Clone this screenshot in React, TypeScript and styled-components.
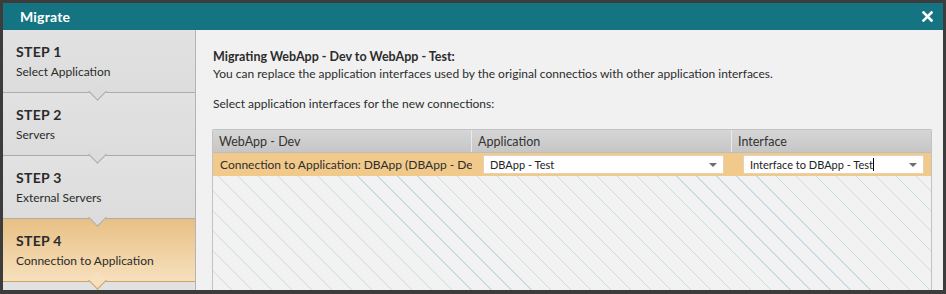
import React from "react";
import styled, { createGlobalStyle } from "styled-components";

const Global = createGlobalStyle`
  html, body { margin: 0; padding: 0; background: #3a3a3a; }
  body { font-family: Lato, "Open Sans", sans-serif; }
  #root { width: 946px; height: 294px; }
`;

const Frame = styled.div`
  box-sizing: border-box;
  width: 946px;
  height: 294px;
  border: 3px solid #3c3c3c;
  border-bottom-width: 4px;
  display: flex;
  flex-direction: column;
  background: #f1f1f1;
  overflow: hidden;
`;

const TitleBar = styled.div`
  height: 27px;
  flex: 0 0 27px;
  background: #157482;
  display: flex;
  align-items: center;
  justify-content: space-between;
  padding: 0 10px 0 17px;
  color: #fff;
  font-weight: 700;
  font-size: 14px;
  letter-spacing: 0.2px;
`;

const Body = styled.div`
  flex: 1;
  display: flex;
  min-height: 0;
`;

const Sidebar = styled.div`
  width: 192px;
  flex: 0 0 192px;
  border-right: 1px solid #b4b4b4;
  background: #dcdcdc;
  display: flex;
  flex-direction: column;
`;

const Step = styled.div<{ $active?: boolean }>`
  position: relative;
  box-sizing: border-box;
  height: 63px;
  flex: 0 0 63px;
  padding: 13px 0 0 13px;
  border-bottom: 1px solid ${(p) => (p.$active ? "#c9a36a" : "#acacac")};
  background: ${(p) =>
    p.$active
      ? "linear-gradient(#e8c085, #f7e0bd)"
      : "linear-gradient(#e2e2e2, #dcdcdc)"};
  color: #2b2b2b;
  &::after {
    content: "";
    position: absolute;
    left: 88px;
    bottom: -7px;
    width: 12px;
    height: 12px;
    transform: translateY(-1px) rotate(45deg);
    transform-origin: center;
    background: ${(p) => (p.$active ? "#f7e0bd" : "#dcdcdc")};
    border-right: 1px solid ${(p) => (p.$active ? "#c9a36a" : "#acacac")};
    border-bottom: 1px solid ${(p) => (p.$active ? "#c9a36a" : "#acacac")};
    z-index: 2;
  }
`;

const StepTitle = styled.div`
  font-weight: 700;
  font-size: 14px;
  line-height: 18px;
  letter-spacing: 0.3px;
`;

const StepLabel = styled.div`
  font-size: 12px;
  line-height: 16px;
  margin-top: 3px;
`;

const Main = styled.div`
  flex: 1;
  display: flex;
  flex-direction: column;
  padding: 18px 11px 0 16px;
  color: #2c2c2c;
  font-size: 12px;
  min-width: 0;
`;

const Heading = styled.div`
  font-weight: 700;
  font-size: 12.5px;
  line-height: 17px;
  padding-left: 1px;
`;

const Para = styled.div<{ $gap?: number }>`
  line-height: 17px;
  padding-left: 1px;
  margin-top: ${(p) => p.$gap ?? 0}px;
`;

const Grid = styled.div`
  margin-top: 17px;
  flex: 1;
  display: flex;
  flex-direction: column;
  border: 1px solid #c2c2c2;
  border-bottom: none;
  border-radius: 2px 2px 0 0;
  background-color: #f2f2f2;
  background-image: repeating-linear-gradient(
    45deg,
    transparent 0px,
    transparent 13.2px,
    #cadcdf 13.2px,
    #cadcdf 14.1px
  );
  overflow: hidden;
`;

const Row = styled.div<{ $kind: "head" | "sel" }>`
  display: grid;
  grid-template-columns: 259px 260px 1fr;
  height: ${(p) => (p.$kind === "head" ? 22 : 23)}px;
  background: ${(p) =>
    p.$kind === "head" ? "linear-gradient(#d6d6d6, #c6c6c6)" : "#f1c98b"};
  border-bottom: ${(p) => (p.$kind === "head" ? "1px solid #bdbdbd" : "none")};
`;

const HeadCell = styled.div<{ $last?: boolean }>`
  display: flex;
  align-items: center;
  padding-left: 6px;
  font-size: 12.5px;
  color: #333;
  border-right: ${(p) => (p.$last ? "none" : "1px solid #eaeaea")};
`;

const Cell = styled.div<{ $pad?: string }>`
  display: flex;
  align-items: center;
  padding: ${(p) => p.$pad ?? "0 0 0 7px"};
  font-size: 12px;
  color: #2e2e2e;
  white-space: nowrap;
  overflow: hidden;
  min-width: 0;
`;

const Select = styled.div`
  flex: 1;
  height: 19px;
  box-sizing: border-box;
  background: #fff;
  border: 1px solid #e2d2b6;
  display: flex;
  align-items: center;
  justify-content: space-between;
  padding: 0 6px 0 6px;
  font-size: 11px;
  color: #222;
`;

const Caret = styled.span`
  width: 0;
  height: 0;
  border-left: 4px solid transparent;
  border-right: 4px solid transparent;
  border-top: 4px solid #6d6d6d;
`;

const TextCursor = styled.span`
  display: inline-block;
  width: 1px;
  height: 13px;
  background: #000;
  vertical-align: -2px;
`;

const CloseIcon = () => (
  <svg width="11" height="11" viewBox="0 0 11 11">
    <path d="M1.5 1.5 L9.5 9.5 M9.5 1.5 L1.5 9.5" stroke="#fff" strokeWidth="2.6" strokeLinecap="square" />
  </svg>
);

const steps = [
  { n: 1, label: "Select Application" },
  { n: 2, label: "Servers" },
  { n: 3, label: "External Servers" },
  { n: 4, label: "Connection to Application", active: true },
];

export default function App() {
  return (
    <>
      <Global />
      <Frame>
        <TitleBar>
          <span>Migrate</span>
          <CloseIcon />
        </TitleBar>
        <Body>
          <Sidebar>
            {steps.map((s) => (
              <Step key={s.n} $active={s.active}>
                <StepTitle>STEP {s.n}</StepTitle>
                <StepLabel>{s.label}</StepLabel>
              </Step>
            ))}
            <Step />
          </Sidebar>
          <Main>
            <Heading>Migrating WebApp - Dev to WebApp - Test:</Heading>
            <Para>
              You can replace the application interfaces used by the original connectios with other
              application interfaces.
            </Para>
            <Para $gap={13}>Select application interfaces for the new connections:</Para>
            <Grid>
              <Row $kind="head">
                <HeadCell>WebApp - Dev</HeadCell>
                <HeadCell>Application</HeadCell>
                <HeadCell $last>Interface</HeadCell>
              </Row>
              <Row $kind="sel">
                <Cell>Connection to Application: DBApp (DBApp - Dev)</Cell>
                <Cell $pad="0 8px 0 11px">
                  <Select>
                    <span>DBApp - Test</span>
                    <Caret />
                  </Select>
                </Cell>
                <Cell $pad="0 7px 0 11px">
                  <Select>
                    <span>
                      Interface to DBApp - Test
                      <TextCursor />
                    </span>
                    <Caret />
                  </Select>
                </Cell>
              </Row>
            </Grid>
          </Main>
        </Body>
      </Frame>
    </>
  );
}
